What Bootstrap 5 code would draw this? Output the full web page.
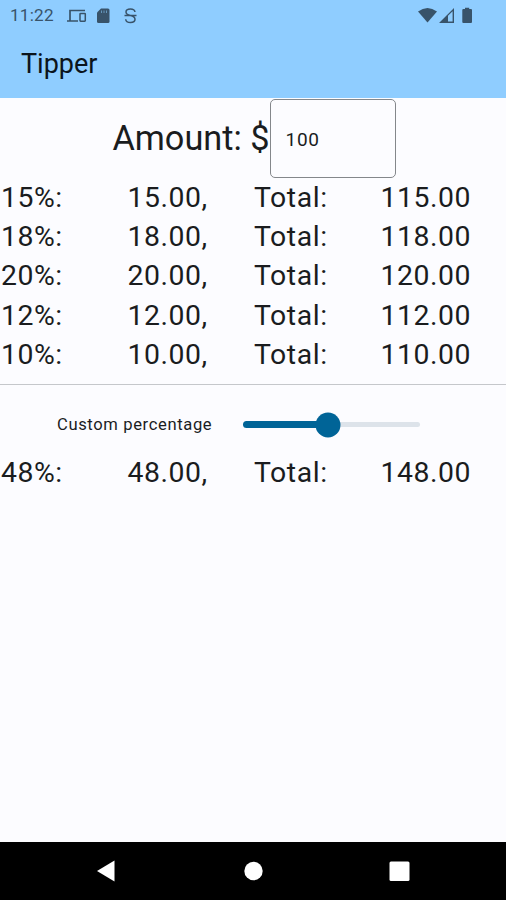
<!DOCTYPE html>
<html lang="en">
<head>
<meta charset="utf-8">
<meta name="viewport" content="width=device-width, initial-scale=1">
<title>Tipper</title>
<link href="https://cdn.jsdelivr.net/npm/bootstrap@5.3.0/dist/css/bootstrap.min.css" rel="stylesheet">
<style>
  body { font-family: Roboto, sans-serif; background: #fcfcff; color: #1a1c1e; overflow: hidden; }
  .app-top { background: #8fcdff; height: 98px; }
  .status { height: 32px; padding: 0 32px 0 10px; color: #38536a; }
  .clock { width: 56px; font-size: 17.2px; letter-spacing: .2px; }
  .status svg { display: block; }
  .app-title { font-size: 27px; line-height: 34px; margin: 15px 0 0 21px; color: #0b141c; font-weight: 400; }
  .amount-row { height: 79.5px; padding-left: 2px; }
  .amount-label { font-size: 34.3px; line-height: 44px; padding-top: 1px; }
  .amount-box { width: 126px; height: 79px; margin-top: 1px; border: 1px solid #84878b; border-radius: 5px; padding: 2px 16px 0 15px; font-size: 19px; letter-spacing: .7px; background: transparent; color: #1a1c1e; }
  .tip-row { height: 39.4px; line-height: 40.2px; font-size: 28.4px; letter-spacing: .55px; white-space: nowrap; }
  .tip-row > div { padding-left: 1px; padding-right: 0; }
  .split { height: 1.5px; background: #c5c7cb; margin-top: 9.5px; }
  .custom { height: 68px; padding: 11px 0 0 57px; }
  .custom-label { width: 186px; font-size: 16.6px; letter-spacing: .62px; }
  .slider { width: 177px; height: 24px; }
  .slider-on { height: 7px; background: #006497; border-radius: 4px 0 0 4px; }
  .slider-off { height: 5px; background: #dde3ea; border-radius: 0 3px 3px 0; }
  .slider-thumb { width: 25px; height: 25px; background: #006497; top: 50%; }
  .nav-keys { height: 58px; background: #000; }
</style>
<script src="https://cdn.jsdelivr.net/npm/bootstrap@5.3.0/dist/js/bootstrap.bundle.min.js"></script>
</head>
<body>
<div class="d-flex flex-column vh-100">
  <header class="app-top">
    <div class="status d-flex align-items-center justify-content-between">
      <div class="d-flex align-items-center">
        <span class="clock">11:22</span>
        <svg width="74" height="20" viewBox="66 6 74 20" fill="none" stroke="currentColor">
          <path d="M85 10.500H70V20.500M67 21H78" stroke-width="1.700"/>
          <rect x="80" y="13.500" width="5.300" height="7.700" rx=".6" stroke-width="1.500"/>
          <path d="M101 8.500H108Q109.500 8.500 109.500 10V21.500Q109.500 23 108 23H98.500Q97 23 97 21.500V12.500Z" fill="currentColor" stroke="none"/>
          <path d="M101.500 10.500V13M104 10.500V13M106.500 10.500V13" stroke="#6496bb" stroke-width="1"/>
          <path d="M135 12Q134.500 9 130.500 9Q126 9 126 12Q126 14.500 130.500 15.500Q135 16.500 135 19.300Q135 22.500 130.500 22.500Q126 22.500 125.700 19.200M124.500 15.600H136.500" stroke-width="1.500"/>
        </svg>
      </div>
      <svg width="58" height="20" viewBox="416 6 58 20" fill="currentColor">
        <path d="M418 11.500Q427.500 4.500 437 11.500L427.500 22.500Z"/>
        <path d="M439 23L454 8V23ZM448 15.800V21.600H452.600V11.300Z" fill-rule="evenodd"/>
        <path d="M465 9V7.700H469.200V9H471Q472 9 472 10V22Q472 23 471 23H463.300Q462.300 23 462.300 22V10Q462.300 9 463.300 9Z"/>
      </svg>
    </div>
    <h1 class="app-title">Tipper</h1>
  </header>
  <main class="flex-grow-1">
    <div class="amount-row d-flex justify-content-center align-items-center">
      <label class="amount-label" for="amount">Amount: $</label>
      <input class="amount-box" id="amount" value="100">
    </div>
    <div class="tip-row row g-0"><div class="col-3">15%:</div><div class="col-3">15.00,</div><div class="col-3">Total:</div><div class="col-3">115.00</div></div>
    <div class="tip-row row g-0"><div class="col-3">18%:</div><div class="col-3">18.00,</div><div class="col-3">Total:</div><div class="col-3">118.00</div></div>
    <div class="tip-row row g-0"><div class="col-3">20%:</div><div class="col-3">20.00,</div><div class="col-3">Total:</div><div class="col-3">120.00</div></div>
    <div class="tip-row row g-0"><div class="col-3">12%:</div><div class="col-3">12.00,</div><div class="col-3">Total:</div><div class="col-3">112.00</div></div>
    <div class="tip-row row g-0"><div class="col-3">10%:</div><div class="col-3">10.00,</div><div class="col-3">Total:</div><div class="col-3">110.00</div></div>
    <div class="split"></div>
    <div class="custom d-flex align-items-center">
      <div class="custom-label">Custom percentage</div>
      <div class="slider position-relative d-flex align-items-center">
        <div class="slider-on" style="width:48%"></div>
        <div class="slider-off flex-grow-1"></div>
        <div class="slider-thumb position-absolute rounded-circle translate-middle" style="left:48%"></div>
      </div>
    </div>
    <div class="tip-row row g-0"><div class="col-3">48%:</div><div class="col-3">48.00,</div><div class="col-3">Total:</div><div class="col-3">148.00</div></div>
  </main>
  <footer class="nav-keys">
    <svg class="d-block" width="506" height="58" viewBox="0 0 506 58" fill="#fff">
      <path d="M97 29L114.500 18.500V39.500Z"/><circle cx="253.500" cy="29" r="9.200"/><rect x="389.500" y="19.500" width="20" height="19.500" rx="1.500"/>
    </svg>
  </footer>
</div>
</body>
</html>
